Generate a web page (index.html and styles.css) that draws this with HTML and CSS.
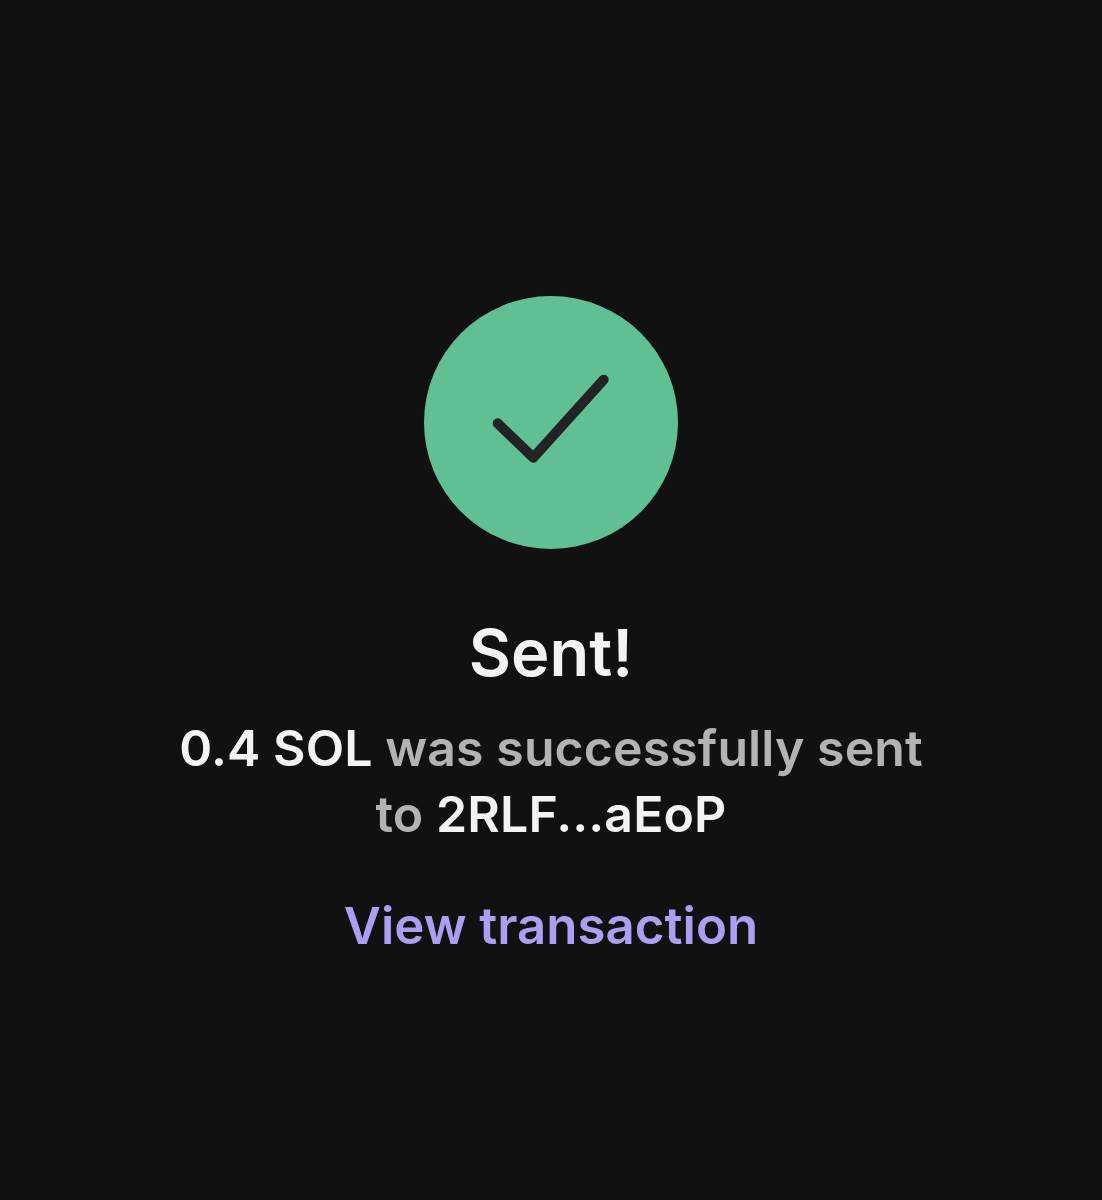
FILE: index.html
```html
<!DOCTYPE html>
<html lang="en">
<head>
<meta charset="utf-8">
<title>Sent</title>
<link rel="stylesheet" href="styles.css">
</head>
<body>
<main class="screen">
  <div class="badge">
    <svg class="check" viewBox="0 0 254 254" width="254" height="254" aria-hidden="true">
      <path d="M73.7 127.3 L109.3 161.7 L179.7 83.7" fill="none" stroke="#232323" stroke-width="10" stroke-linecap="round" stroke-linejoin="round"/>
    </svg>
  </div>
  <h1 class="title">Sent!</h1>
  <p class="message"><strong>0.4 SOL</strong> was successfully sent<br>to <strong>2RLF...aEoP</strong></p>
  <a class="link" href="#">View transaction</a>
</main>
</body>
</html>
```

FILE: styles.css
```css
html, body {
  margin: 0;
  height: 100%;
  background: #111111;
}
.screen {
  box-sizing: border-box;
  height: 1200px;
  padding-top: 296px;
  display: flex;
  flex-direction: column;
  align-items: center;
  font-family: Inter, "Liberation Sans", sans-serif;
  font-weight: 600;
  text-align: center;
}
.badge {
  width: 254px;
  height: 253px;
  border-radius: 50%;
  background: #60c094;
}
.check { display: block; }
.title {
  margin: 66px 0 0;
  font-size: 65px;
  line-height: 76px;
  font-weight: 600;
  color: #f3f3f3;
}
.message {
  margin: 24px 0 0;
  font-size: 50px;
  line-height: 66px;
  letter-spacing: 0.1px;
  color: #b3b3b3;
}
.message strong { font-weight: 600; color: #f3f3f3; }
.link {
  margin-top: 46px;
  font-size: 51px;
  line-height: 66px;
  color: #ab9ff2;
  text-decoration: none;
}
```
